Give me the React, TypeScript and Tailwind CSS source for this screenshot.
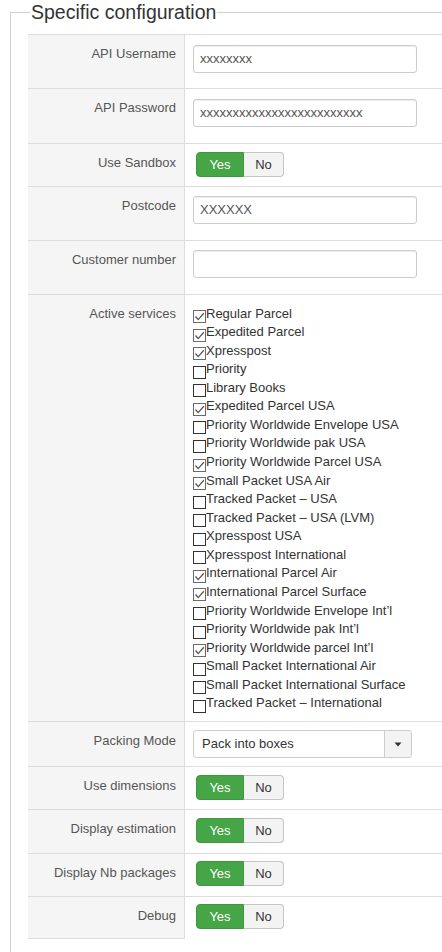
import React from "react";

const services: [string, boolean][] = [
  ["Regular Parcel", true],
  ["Expedited Parcel", true],
  ["Xpresspost", true],
  ["Priority", false],
  ["Library Books", false],
  ["Expedited Parcel USA", true],
  ["Priority Worldwide Envelope USA", false],
  ["Priority Worldwide pak USA", false],
  ["Priority Worldwide Parcel USA", true],
  ["Small Packet USA Air", true],
  ["Tracked Packet – USA", false],
  ["Tracked Packet – USA (LVM)", false],
  ["Xpresspost USA", false],
  ["Xpresspost International", false],
  ["International Parcel Air", true],
  ["International Parcel Surface", true],
  ["Priority Worldwide Envelope Int’l", false],
  ["Priority Worldwide pak Int’l", false],
  ["Priority Worldwide parcel Int’l", true],
  ["Small Packet International Air", false],
  ["Small Packet International Surface", false],
  ["Tracked Packet – International", false],
];

function Row({
  label,
  h,
  children,
  last,
  padTop = "pt-[10px]",
}: {
  label: string;
  h: string;
  children: React.ReactNode;
  last?: boolean;
  padTop?: string;
}) {
  return (
    <div className={`grid grid-cols-[157px_1fr] border-t border-[#ddd] ${h}`}>
      <div
        className={`bg-[#f5f5f5] border-r border-[#ddd] text-right pr-2 pt-[10px] text-[13px] leading-[18px] text-[#555] ${
          last ? "border-b" : ""
        }`}
      >
        {label}
      </div>
      <div className={`pl-2 ${padTop}`}>{children}</div>
    </div>
  );
}

function TextInput({ value }: { value: string }) {
  return (
    <div className="w-[224px] h-[28px] border border-[#ccc] rounded-[3px] px-[6px] flex items-center text-[13px] text-[#555] shadow-[inset_0_1px_1px_rgba(0,0,0,0.075)] bg-white">
      {value}
    </div>
  );
}

function Toggle() {
  return (
    <div className="ml-[3px] flex h-[25px] text-[13px]">
      <div className="w-[48px] h-full flex items-center justify-center bg-[#46a546] border border-[#3f973f] rounded-l-[4px] text-white">
        Yes
      </div>
      <div className="w-[40px] h-full flex items-center justify-center bg-[#f3f3f3] border border-l-0 border-[#c4c4c4] rounded-r-[4px] text-[#333]">
        No
      </div>
    </div>
  );
}

function CheckBox({ checked }: { checked: boolean }) {
  return (
    <div
      className={`w-[13px] h-[13px] mt-[4.5px] shrink-0 border bg-white flex items-center justify-center ${
        checked ? "border-[#6b6b6b]" : "border-[#333]"
      }`}
    >
      {checked && (
        <svg width="11" height="11" viewBox="0 0 11 11">
          <path d="M1.5 5.5 L4.2 8.6 L9.8 2.2" fill="none" stroke="#555" strokeWidth="1.3" />
        </svg>
      )}
    </div>
  );
}

export default function App() {
  return (
    <div className="w-[442px] h-[952px] bg-white overflow-hidden" style={{ fontFamily: '"Liberation Sans", Arial, sans-serif' }}>
      <fieldset className="ml-[10px] border-l border-t border-[#d0d0d0] pl-[17px] pb-[13px] min-w-0">
        <legend className="ml-[2px] px-[1px] text-[19.5px] leading-[24px] text-[#333]">Specific configuration</legend>
        <div className="mt-[10px]">
          <Row label="API Username" h="h-[54px]">
            <TextInput value="xxxxxxxx" />
          </Row>
          <Row label="API Password" h="h-[55px]">
            <TextInput value="xxxxxxxxxxxxxxxxxxxxxxxxx" />
          </Row>
          <Row label="Use Sandbox" h="h-[43px]" padTop="pt-[8px]">
            <Toggle />
          </Row>
          <Row label="Postcode" h="h-[54px]" padTop="pt-[9px]">
            <TextInput value="XXXXXX" />
          </Row>
          <Row label="Customer number" h="h-[54px]" padTop="pt-[9px]">
            <TextInput value="" />
          </Row>
          <Row label="Active services" h="h-[427px]" padTop="pt-[10.5px]">
            <div className="flex flex-col">
              {services.map(([name, checked]) => (
                <div key={name} className="h-[18.57px] flex items-start text-[13px] leading-[15px] text-[#333] whitespace-nowrap">
                  <CheckBox checked={checked} />
                  <span>{name}</span>
                </div>
              ))}
            </div>
          </Row>
          <Row label="Packing Mode" h="h-[45px]" padTop="pt-[8px]">
            <div className="w-[219px] h-[28px] border border-[#ccc] rounded-[3px] flex text-[13px] text-[#333] bg-white overflow-hidden">
              <div className="flex-1 flex items-center pl-[8px]">Pack into boxes</div>
              <div className="w-[27px] border-l border-[#ccc] bg-[#f3f3f3] flex items-center justify-center">
                <svg width="8" height="5" viewBox="0 0 8 5">
                  <path d="M0.5 0.5 L7.5 0.5 L4 4.5 Z" fill="#333" />
                </svg>
              </div>
            </div>
          </Row>
          <Row label="Use dimensions" h="h-[43px]" padTop="pt-[8px]">
            <Toggle />
          </Row>
          <Row label="Display estimation" h="h-[44px]" padTop="pt-[8px]">
            <Toggle />
          </Row>
          <Row label="Display Nb packages" h="h-[43px]" padTop="pt-[7px]">
            <Toggle />
          </Row>
          <Row label="Debug" h="h-[43px]" padTop="pt-[7px]" last>
            <Toggle />
          </Row>
        </div>
      </fieldset>
    </div>
  );
}
